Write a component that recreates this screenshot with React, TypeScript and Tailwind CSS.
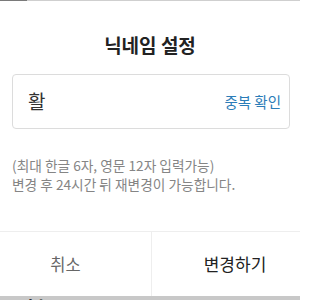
import React from "react";

const font = { fontFamily: '"Noto Sans CJK KR", "Noto Sans", sans-serif' };

export default function App() {
  return (
    <div className="w-[300px] h-[300px] overflow-hidden bg-[#c8c8c8] flex flex-col" style={font}>
      {/* status strip behind the dialog */}
      <div className="h-px flex shrink-0">
        <div className="w-[27px] bg-[#7a7a7a]" />
        <div className="flex-1 bg-[#cfcfcf]" />
      </div>

      <div className="h-[295px] shrink-0 bg-white flex flex-col">
        <h1 className="pt-[31px] text-center text-[19px] leading-[26px] font-bold text-[#222]">
          닉네임 설정
        </h1>

        <div className="ml-3 mr-[10px] mt-[16px] h-[55px] rounded-[4px] border border-[#dcdcdc] flex items-center justify-between pl-[15px] pr-[8px]">
          <span className="text-[19px] text-[#333]">활</span>
          <button className="text-[14.5px] text-[#2b7db8]">중복 확인</button>
        </div>

        <div className="mx-3 mt-[27px] text-[13.7px] leading-[19px] text-[#858585]">
          <p>(최대 한글 6자, 영문 12자 입력가능)</p>
          <p>변경 후 24시간 뒤 재변경이 가능합니다.</p>
        </div>

        <div className="mt-auto h-[65px] border-t border-[#eeeeee] flex">
          <button className="w-[152px] pr-[20px] text-[16.5px] text-[#666] border-r border-[#eeeeee]">취소</button>
          <button className="flex-1 pl-[18px] text-[17px] text-[#222]">변경하기</button>
        </div>
      </div>

      <div className="pl-[2px] pt-[1px] text-[17px] leading-[20px] font-bold text-black">글번호</div>
    </div>
  );
}
